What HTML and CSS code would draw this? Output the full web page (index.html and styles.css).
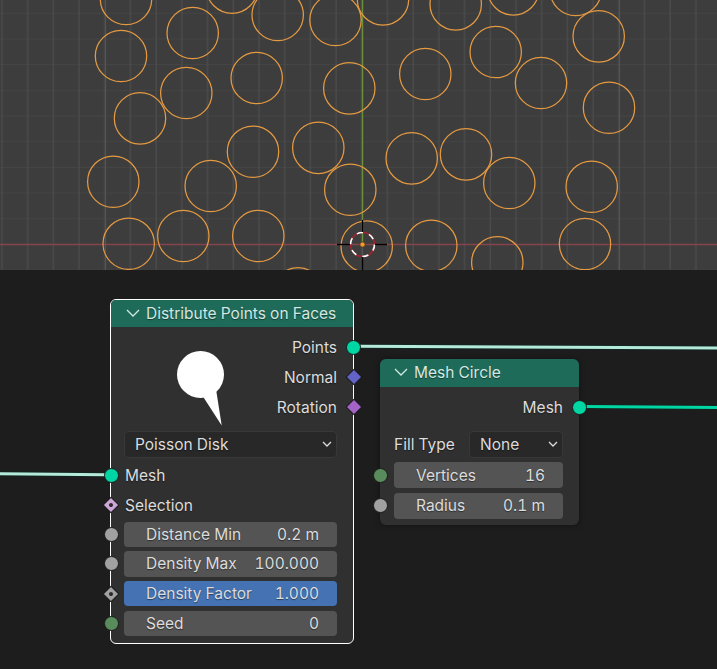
FILE: index.html
```html
<!DOCTYPE html>
<html>
	<head>
		<meta charset="utf-8" />
		<title>Distribute Points on Faces</title>
		<link rel="stylesheet" href="styles.css">
	</head>
	<body>
		<div class="viewport">
			<svg class="scene" width="717" height="270" viewBox="0 0 717 270">
				<defs>
					<pattern id="minorGrid" patternUnits="userSpaceOnUse" x="-0.2" y="-12" width="25.7" height="25.7">
						<path class="grid-minor" d="M2.2 0V25.7M0 25.7H25.7"/>
					</pattern>
				</defs>
				<rect width="717" height="270" fill="url(#minorGrid)"/>
				<path class="grid-major" d="M105.5 0V270M362.5 0V270M619.5 0V270"/>
				<path class="axis-x" d="M0 244.5H717"/>
				<path class="axis-y" d="M362.5 0V244"/>
				<g class="rings">
					<circle cx="126" cy="-1" r="25.7"/>
					<circle cx="121" cy="56" r="25.7"/>
					<circle cx="192.7" cy="33" r="25.7"/>
					<circle cx="232" cy="-12.4" r="25.7"/>
					<circle cx="277.7" cy="15" r="25.7"/>
					<circle cx="335.5" cy="20" r="25.7"/>
					<circle cx="383" cy="-0.7" r="25.7"/>
					<circle cx="455.7" cy="4.3" r="25.7"/>
					<circle cx="513.3" cy="-10.7" r="25.7"/>
					<circle cx="575.7" cy="-10" r="25.7"/>
					<circle cx="598.7" cy="36.3" r="25.7"/>
					<circle cx="495.7" cy="52" r="25.7"/>
					<circle cx="541" cy="83" r="25.7"/>
					<circle cx="425.3" cy="74" r="25.7"/>
					<circle cx="349.3" cy="88.3" r="25.7"/>
					<circle cx="256.7" cy="78" r="25.7"/>
					<circle cx="186.3" cy="93" r="25.7"/>
					<circle cx="140" cy="118.3" r="25.7"/>
					<circle cx="609" cy="107.7" r="25.7"/>
					<circle cx="318.3" cy="147.8" r="25.7"/>
					<circle cx="253" cy="151.7" r="25.7"/>
					<circle cx="411.7" cy="158.3" r="25.7"/>
					<circle cx="466" cy="154.3" r="25.7"/>
					<circle cx="350.3" cy="189.7" r="25.7"/>
					<circle cx="113.3" cy="181.7" r="25.7"/>
					<circle cx="210.7" cy="186" r="25.7"/>
					<circle cx="509.3" cy="183" r="25.7"/>
					<circle cx="591.7" cy="186.7" r="25.7"/>
					<circle cx="128.7" cy="243.7" r="25.7"/>
					<circle cx="183.3" cy="236" r="25.7"/>
					<circle cx="258.3" cy="236" r="25.7"/>
					<circle cx="366.7" cy="246.5" r="25.7"/>
					<circle cx="431.3" cy="245.7" r="25.7"/>
					<circle cx="497.3" cy="262.4" r="25.7"/>
					<circle cx="585" cy="244" r="25.7"/>
					<circle cx="298" cy="293.4" r="25.7"/>
				</g>
				<!-- 3d cursor -->
				<g class="cursor">
					<circle class="cursor-red" cx="362.5" cy="244.5" r="12"/>
					<circle class="cursor-white" cx="362.5" cy="244.5" r="12"/>
					<path class="cursor-cross" d="M337 244.5H350M375 244.5H387M362.5 220V232M362.5 257V270"/>
					<circle class="origin" cx="362.5" cy="244.5" r="2.6"/>
				</g>
			</svg>
		</div>
		<div class="editor">
			<svg class="wires" width="717" height="399" viewBox="0 0 717 399">
				<path class="wire-edge" d="M358 76.2C500 76.8 600 77.4 717 78"/>
				<path class="wire-light" d="M358 76.2C500 76.8 600 77.4 717 78"/>
				<path class="wire-edge" d="M584 136.4C640 136.8 680 137.2 717 137.6"/>
				<path class="wire-mesh" d="M584 136.4C640 136.8 680 137.2 717 137.6"/>
				<path class="wire-edge" d="M0 203.8C40 204 80 204.6 106 204.8"/>
				<path class="wire-light" d="M0 203.8C40 204 80 204.6 106 204.8"/>
			</svg>

			<div class="node node-distribute">
				<div class="node-head">
					<svg class="chevron" width="14" height="8" viewBox="0 0 14 8"><path d="M1 1L7 7L13 1"/></svg>
					<span>Distribute Points on Faces</span>
				</div>
				<svg class="node-pin" width="48" height="76" viewBox="0 0 48 76">
					<circle cx="23.5" cy="23.5" r="23.5"/>
					<path d="M25 44L44.7 74.5L39 38Z"/>
				</svg>
				<div class="node-body">
					<div class="row row-out">Points<i class="socket socket-out geometry"></i></div>
					<div class="row row-out">Normal<i class="socket socket-out diamond vector"></i></div>
					<div class="row row-out">Rotation<i class="socket socket-out diamond rotation"></i></div>
					<div class="select select-wide">Poisson Disk
						<svg class="chevron-small" width="10" height="6" viewBox="0 0 10 6"><path d="M1 1L5 5L9 1"/></svg>
					</div>
					<div class="row row-in row-mesh">Mesh<i class="socket socket-in geometry"></i></div>
					<div class="row row-in">Selection<i class="socket socket-in diamond boolean"><b></b></i></div>
					<div class="fields">
						<div class="field"><span>Distance Min</span><span>0.2 m</span><i class="socket socket-field float"></i></div>
						<div class="field"><span>Density Max</span><span>100.000</span><i class="socket socket-field float"></i></div>
						<div class="field field-active"><span>Density Factor</span><span>1.000</span><i class="socket socket-field diamond float"><b></b></i></div>
						<div class="field"><span>Seed</span><span>0</span><i class="socket socket-field integer"></i></div>
					</div>
				</div>
			</div>

			<div class="node node-circle">
				<div class="node-head">
					<svg class="chevron" width="14" height="8" viewBox="0 0 14 8"><path d="M1 1L7 7L13 1"/></svg>
					<span>Mesh Circle</span>
				</div>
				<div class="node-body">
					<div class="row row-out">Mesh<i class="socket socket-out geometry"></i></div>
					<div class="fill-row">
						<span>Fill Type</span>
						<div class="select">None
							<svg class="chevron-small" width="10" height="6" viewBox="0 0 10 6"><path d="M1 1L5 5L9 1"/></svg>
						</div>
					</div>
					<div class="fields">
						<div class="field"><span>Vertices</span><span>16</span><i class="socket socket-field integer"></i></div>
						<div class="field"><span>Radius</span><span>0.1 m</span><i class="socket socket-field float"></i></div>
					</div>
				</div>
			</div>
		</div>
	</body>
</html>
```

FILE: styles.css
```css
body, html {
	margin: 0;
	padding: 0;
	width: 717px;
	height: 669px;
	overflow: hidden;
	background-color: #1d1d1d;
	font-family: "Inter", "Liberation Sans", sans-serif;
}

.viewport {
	height: 270px;
	background-color: #3d3d3d;
}
.scene {
	display: block;
}
.grid-minor {
	fill: none;
	stroke: #4c4c4c;
	stroke-width: 1.2;
}
.grid-major {
	fill: none;
	stroke: #555;
	stroke-width: 1.2;
}
.axis-x {
	stroke: #85434b;
	stroke-width: 1.6;
}
.axis-y {
	stroke: #6c8f3c;
	stroke-width: 1.4;
}
.rings circle {
	fill: none;
	stroke: #e59a42;
	stroke-width: 1.25;
}
.cursor-red, .cursor-white {
	fill: none;
	stroke-width: 1.6;
}
.cursor-red {
	stroke: #a5222e;
}
.cursor-white {
	stroke: #fff;
	stroke-dasharray: 6.3 6.3;
}
.cursor-cross {
	stroke: #000;
	stroke-width: 1.4;
}
.origin {
	fill: #f29a2e;
	stroke: #4a3a20;
	stroke-width: 0.8;
}

/* node editor */
.editor {
	position: relative;
	height: 399px;
}
.wires {
	position: absolute;
	left: 0;
	top: 0;
}
.wires path {
	fill: none;
}
.wire-edge {
	stroke: #14241f;
	stroke-width: 5;
}
.wire-light {
	stroke: #b4ead9;
	stroke-width: 3;
}
.wire-mesh {
	stroke: #00d6a3;
	stroke-width: 3;
}

.node {
	position: absolute;
	box-sizing: border-box;
	background-color: #303030;
	border-radius: 6px;
	color: #dcdcdc;
	font-size: 15.5px;
	font-variant-numeric: tabular-nums;
	text-shadow: 0 1px 1px rgba(0,0,0,0.45);
}
.node-distribute {
	left: 110px;
	top: 29px;
	width: 244px;
	height: 345px;
	border: 1px solid #fff;
}
.node-circle {
	left: 380px;
	top: 89px;
	width: 199px;
	height: 166px;
	box-shadow: 0 0 6px rgba(0,0,0,0.4);
}
.node-head {
	display: flex;
	align-items: center;
	gap: 6px;
	box-sizing: border-box;
	height: 27px;
	padding: 0 0 1px 15px;
	background-color: #1f6b5a;
	border-radius: 5px 5px 0 0;
	color: #d3e8e0;
}
.node-circle .node-head {
	height: 28px;
	padding: 0 0 2px 14px;
	border-radius: 6px 6px 0 0;
}
.chevron {
	fill: none;
	stroke: #d3e8e0;
	stroke-width: 1.3;
}
.node-pin {
	position: absolute;
	left: 66px;
	top: 51px;
	fill: #fff;
}
.node-body {
	display: flex;
	flex-direction: column;
	padding: 5px 16px 0 13px;
}
.node-circle .node-body {
	padding: 5px 16px 0 14px;
}

.row {
	position: relative;
	display: flex;
	align-items: center;
	box-sizing: border-box;
	height: 30px;
}
.row-in {
	padding-left: 1px;
}
.row-out {
	justify-content: flex-end;
}
.row-mesh {
	margin-top: 2px;
}

.select {
	position: relative;
	display: flex;
	align-items: center;
	justify-content: space-between;
	box-sizing: border-box;
	height: 27px;
	padding: 0 4px 1px 10px;
	background-color: #282828;
	border: 1px solid #383838;
	border-radius: 4px;
}
.select-wide {
	margin-top: 9px;
}
.chevron-small {
	fill: none;
	stroke: #dcdcdc;
	stroke-width: 1.3;
}
.fill-row {
	display: flex;
	align-items: center;
	justify-content: space-between;
	margin-top: 9px;
	height: 27px;
}
.fill-row .select {
	width: 94px;
}

.fields {
	display: flex;
	flex-direction: column;
	gap: 4.2px;
	margin-top: 1.5px;
}
.node-circle .fields {
	margin-top: 4px;
}
.field {
	position: relative;
	display: flex;
	align-items: center;
	justify-content: space-between;
	box-sizing: border-box;
	height: 25.5px;
	padding: 0 18px 0 22px;
	background-color: #545454;
	border-radius: 4px;
}
.node-circle .field {
	height: 26.4px;
}
.field-active {
	background-color: #4472b3;
}

/* sockets sit on the node border */
.socket {
	position: absolute;
	box-sizing: border-box;
	width: 15px;
	height: 15px;
	top: 50%;
	margin-top: -7.5px;
	border: 1px solid #1a1a1a;
	border-radius: 50%;
	display: flex;
	align-items: center;
	justify-content: center;
}
.socket-out {
	right: -24px;
}
.socket-in {
	left: -20.5px;
}
.socket-field {
	left: -20.5px;
}
.node-circle .socket-field {
	left: -21.5px;
}
.diamond {
	width: 12px;
	height: 12px;
	margin-top: -6px;
	border-radius: 1px;
	transform: rotate(45deg);
}
.socket-out.diamond {
	right: -22.5px;
}
.socket-in.diamond, .socket-field.diamond {
	left: -19px;
}
.diamond b {
	width: 4px;
	height: 4px;
	background-color: #2a2a2a;
	border-radius: 50%;
}
.geometry {
	background-color: #00d6a3;
}
.vector {
	background-color: #6363c7;
}
.rotation {
	background-color: #a363c7;
}
.boolean {
	background-color: #cca6d6;
}
.float {
	background-color: #a1a1a1;
}
.integer {
	background-color: #598c5c;
}
```
